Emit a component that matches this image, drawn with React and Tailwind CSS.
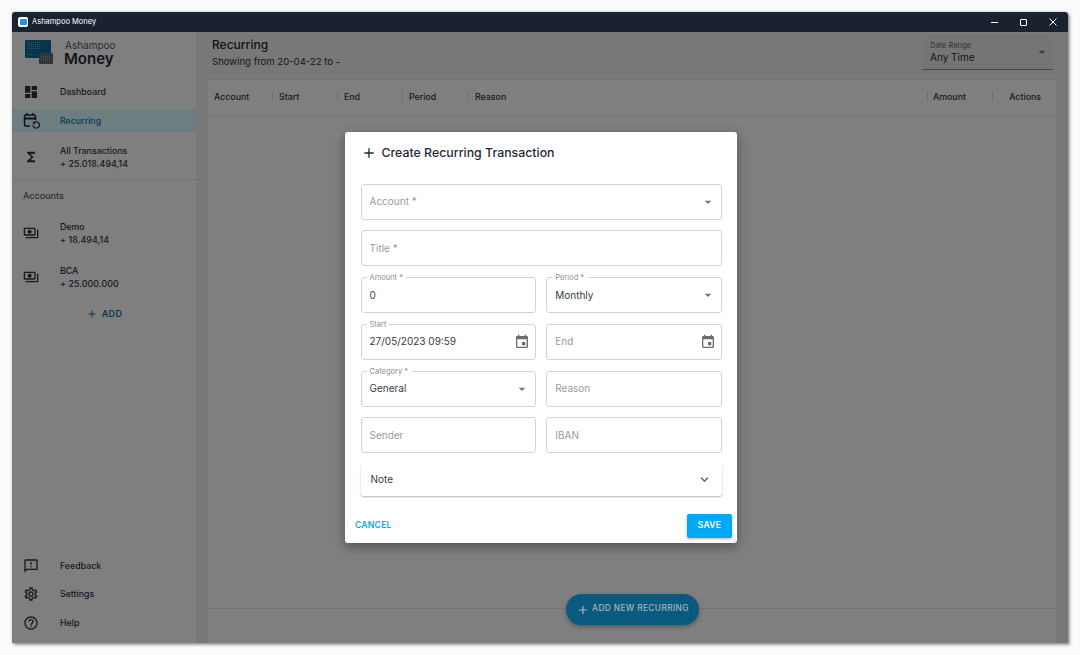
import React from 'react'
import { MdDashboard, MdFunctions, MdOutlinePayments, MdOutlineFeedback, MdOutlineSettings, MdHelpOutline, MdEvent, MdArrowDropDown, MdExpandMore, MdAdd } from 'react-icons/md'

const font = { fontFamily: 'Inter, sans-serif' }

const Logo = () => (
  <svg width="29" height="26" viewBox="0 0 29 26">
    <defs>
      <pattern id="blueDots" width="2" height="2" patternUnits="userSpaceOnUse">
        <rect width="1" height="1" fill="#6fa3bd" />
      </pattern>
      <pattern id="grayDots" width="2" height="2" patternUnits="userSpaceOnUse">
        <rect width="1" height="1" fill="#a4aaad" />
      </pattern>
    </defs>
    <rect x="0" y="0" width="26" height="18" rx="1" fill="#0d6a99" />
    <rect x="2" y="2" width="14" height="8" fill="url(#blueDots)" />
    <rect x="2" y="13" width="8" height="3" fill="url(#blueDots)" />
    <rect x="14" y="13" width="14" height="11" rx="1" fill="#5f6a70" />
    <rect x="16" y="15" width="10" height="7" fill="url(#grayDots)" />
  </svg>
)

const RecurringIcon = () => (
  <svg width="17" height="18" viewBox="0 0 17 18" fill="none" stroke="#1f2730" strokeWidth="1.5">
    <path d="M7 14H2.8C2 14 1.5 13.5 1.5 12.8V4.2C1.5 3.5 2 3 2.8 3H11.2C12 3 12.5 3.5 12.5 4.2V8" />
    <path d="M1.5 6.5H12.5" strokeWidth="2" />
    <path d="M4 1V3M10 1V3" />
    <path d="M10 13a3.2 3.2 0 1 0 1-2.4" strokeWidth="1.2" />
    <path d="M10.2 9.6v2h2" strokeWidth="1" />
  </svg>
)

const NavRow = ({ icon, label, active }) => (
  <div className={`flex h-[23px] items-center pl-[11px] ${active ? 'bg-[#dcfbff] text-[#0f76a8]' : 'text-[#2a323d]'}`}>
    <span className="flex w-[37px] justify-start">{icon}</span>
    <span className="text-[8.8px] font-medium">{label}</span>
  </div>
)

const AccountRow = ({ icon, label, amount }) => (
  <div className="flex items-center pl-[11px] text-[#2a323d]">
    <span className="flex w-[37px] justify-start">{icon}</span>
    <div className="flex flex-col gap-[2px] text-[8.8px] font-medium leading-[11px]">
      <span>{label}</span>
      <span className="tracking-[0.1px]">{amount}</span>
    </div>
  </div>
)

const Field = ({ label, value, placeholder, right, className }) => (
  <div className={`relative flex h-[36px] items-center justify-between rounded-[3px] border border-[#d4d4d4] pl-2 pr-[5px] ${className || ''}`}>
    {label && (
      <span className="absolute -top-[4px] left-[5px] bg-white px-[3px] text-[7.5px] leading-[8px] text-[#8c8c8c]">{label}</span>
    )}
    <span className={`text-[10px] ${value ? 'text-[#333b45]' : 'text-[#9a9a9a]'}`}>{value || placeholder}</span>
    {right}
  </div>
)

const Drop = () => <MdArrowDropDown size={16} className="text-[#757575]" />
const Cal = () => <MdEvent size={16} className="text-[#6d6d6d]" />

const cols = [
  ['Account', 'w-[65px]', 'pl-[7px]'],
  ['Start', 'w-[65px]', 'pl-[7px]'],
  ['End', 'w-[65px]', 'pl-[7px]'],
  ['Period', 'w-[66px]', 'pl-[7px]'],
  ['Reason', 'flex-1', 'pl-[7px]'],
  ['Amount', 'w-[65px]', 'pl-[6px]'],
]

export default function App() {
  return (
    <div className="h-[655px] w-[1080px] overflow-hidden bg-[#fbfbfb] pl-3 pt-3" style={font}>
      <div className="relative flex h-[631px] w-[1056px] flex-col overflow-hidden rounded-t-[3px] bg-white shadow-[2px_2px_3px_rgba(0,0,0,0.35),0_0_3px_rgba(0,0,0,0.25)]">
        {/* title bar */}
        <div className="flex h-5 shrink-0 items-center bg-[#1a2230] pl-[6px] text-white">
          <span className="flex h-[10px] w-[10px] items-center justify-center rounded-[2px] bg-white">
            <span className="h-[6px] w-[7px] rounded-[1px] bg-[#2b8fe0]" />
          </span>
          <span className="ml-[4px] text-[7.5px]">Ashampoo Money</span>
          <div className="ml-auto flex items-center gap-[22px] pr-[11px]">
            <span className="h-px w-[7px] bg-white" />
            <span className="h-[7px] w-[7px] rounded-[1px] border border-white" />
            <svg width="8" height="8" viewBox="0 0 8 8" stroke="white" strokeWidth="1"><path d="M0.5 0.5L7.5 7.5M7.5 0.5L0.5 7.5" /></svg>
          </div>
        </div>

        <div className="flex min-h-0 flex-1">
          {/* sidebar */}
          <aside className="flex w-[184px] shrink-0 flex-col bg-white pb-[9px]">
            <div className="flex h-[40px] shrink-0 items-start pl-[13px] pt-[8px]">
              <Logo />
              <div className="ml-[11px] -mt-[1px] flex flex-col">
                <span className="text-[10px] leading-[12px] text-[#4b5563]">Ashampoo</span>
                <span className="-ml-px text-[15px] font-semibold leading-[15px] text-[#1f2937]">Money</span>
              </div>
            </div>
            <div className="mt-[8px] flex flex-col gap-[6px]">
              <NavRow label="Dashboard" icon={<MdDashboard size={16} />} />
              <NavRow active label="Recurring" icon={<RecurringIcon />} />
            </div>
            <div className="mt-[13px]">
              <AccountRow label="All Transactions" amount="+ 25.018.494,14" icon={<MdFunctions size={16} />} />
            </div>
            <div className="mt-[10px] border-t border-[#e6e6e6] pl-[11px] pt-[10px] text-[9px] font-medium leading-[11px] text-[#555c66]">Accounts</div>
            <div className="mt-[20px] flex flex-col gap-[20px]">
              <AccountRow label="Demo" amount="+ 18.494,14" icon={<MdOutlinePayments size={16} />} />
              <AccountRow label="BCA" amount="+ 25.000.000" icon={<MdOutlinePayments size={16} />} />
            </div>
            <div className="mt-[18px] flex items-center justify-center gap-[4px] text-[9px] font-semibold tracking-[0.4px] text-[#0f6f9e]">
              <MdAdd size={12} />
              ADD
            </div>
            <div className="mt-auto flex flex-col gap-[5.5px]">
              <NavRow label="Feedback" icon={<MdOutlineFeedback size={16} />} />
              <NavRow label="Settings" icon={<MdOutlineSettings size={16} />} />
              <NavRow label="Help" icon={<MdHelpOutline size={16} />} />
            </div>
          </aside>

          {/* main */}
          <main className="flex min-w-0 flex-1 flex-col bg-[#f0f0f0] pl-[10px] pr-[10px]">
            <div className="flex h-[47px] shrink-0 items-start justify-between">
              <div className="pl-[6px] pt-[6px]">
                <div className="text-[12px] font-medium leading-[14px] text-[#1f2937]">Recurring</div>
                <div className="mt-[4px] text-[9.55px] leading-[12px] text-[#27303c]">Showing from 20-04-22 to -</div>
              </div>
              <div className="mr-[5px] mt-[3px] flex h-[35px] w-[131px] items-center justify-between border-b border-[#8f8f8f] bg-[#ebebeb] pl-2 pr-[3px]">
                <div className="flex flex-col">
                  <span className="text-[7.5px] leading-[10px] text-[#666]">Date Range</span>
                  <span className="text-[10px] leading-[13px] text-[#222b36]">Any Time</span>
                </div>
                <Drop />
              </div>
            </div>
            <div className="flex min-h-0 flex-1 flex-col border border-b-0 border-[#e8e8e8] bg-white">
              <div className="flex h-[36px] shrink-0 items-center border-b border-[#e8e8e8] pb-[2px]">
                {cols.map(([name, w, pad]) => (
                  <div key={name} className={`flex h-[34px] items-center ${w}`}>
                    <span className={`flex-1 text-[8.8px] font-medium text-[#2b3440] ${pad}`}>{name}</span>
                    <span className="-mr-px h-[9px] w-px bg-[#d8d8d8]" />
                  </div>
                ))}
                <div className="flex h-[34px] w-[65px] items-center justify-end pr-4 text-[8.8px] font-medium text-[#2b3440]">Actions</div>
              </div>
              <div className="flex-1" />
              <div className="h-[35px] shrink-0 border-t border-[#e0e0e0]" />
            </div>
          </main>
        </div>

        {/* modal backdrop */}
        <div className="absolute inset-x-0 bottom-0 top-5 bg-black/50" />

        <div className="absolute left-[554px] top-[582px] flex h-[31px] w-[133px] items-center justify-center gap-[2px] rounded-full bg-[#0a5a80] pb-[3px] text-[8.4px] font-medium tracking-[0.35px] text-[#a9b5bc] shadow-[0_2px_4px_rgba(0,0,0,0.3)]">
          <MdAdd size={14} className="mt-[3px]" />
          ADD NEW RECURRING
        </div>

        {/* dialog */}
        <div className="absolute left-[333px] top-[120px] flex h-[411px] w-[392px] flex-col rounded-[3px] bg-white px-[15.5px] shadow-[0_4px_12px_rgba(0,0,0,0.35)]">
          <div className="flex h-[51.5px] shrink-0 items-start pt-[12px] text-[#1f2937]">
            <MdAdd size={16} className="mt-[1px]" />
            <span className="ml-[5px] text-[12.35px] font-medium leading-[18px]">Create Recurring Transaction</span>
          </div>
          <div className="flex flex-col gap-[10.75px]">
            <Field placeholder="Account *" right={<Drop />} />
            <Field placeholder="Title *" />
            <div className="grid grid-cols-2 gap-x-[10.5px] gap-y-[10.75px]">
              <Field label="Amount *" value="0" />
              <Field label="Period *" value="Monthly" right={<Drop />} />
              <Field label="Start" value="27/05/2023 09:59" right={<Cal />} />
              <Field placeholder="End" right={<Cal />} />
              <Field label="Category *" value="General" right={<Drop />} />
              <Field placeholder="Reason" />
              <Field placeholder="Sender" />
              <Field placeholder="IBAN" />
            </div>
            <div className="flex h-[32px] items-center justify-between rounded-[3px] pb-px pl-[10px] pr-[10px] shadow-[0_1px_2px_rgba(0,0,0,0.3)]">
              <span className="text-[10px] text-[#333b45]">Note</span>
              <MdExpandMore size={15} className="text-[#555]" />
            </div>
          </div>
          <div className="-ml-[5.5px] -mr-[10.5px] mt-[17.5px] flex items-center justify-between">
            <span className="text-[8.5px] font-semibold tracking-[0.3px] text-[#03a9f4]">CANCEL</span>
            <span className="flex h-[24px] w-[45px] items-center justify-center rounded-[2px] bg-[#03a9f4] text-[8.5px] font-semibold tracking-[0.3px] text-white shadow-[0_1px_3px_rgba(0,0,0,0.3)]">SAVE</span>
          </div>
        </div>
      </div>
    </div>
  )
}
